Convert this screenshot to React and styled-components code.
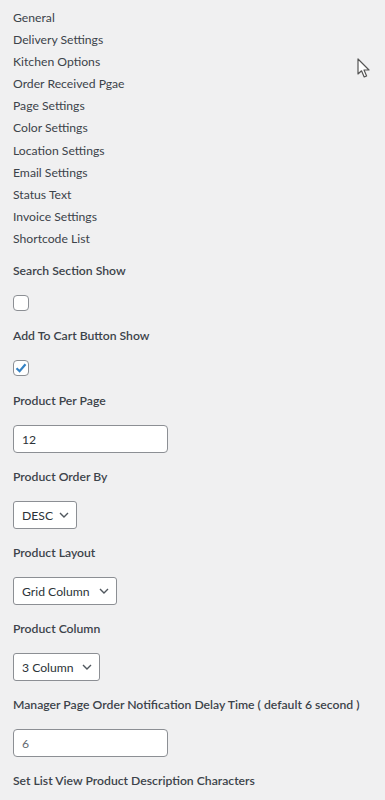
import React from "react";
import styled, { createGlobalStyle } from "styled-components";

const Global = createGlobalStyle`
  html, body {
    margin: 0;
    background: #f0f0f1;
  }
  body {
    font-family: "Segoe UI", Lato, "Liberation Sans", sans-serif;
    font-size: 12.2px;
    color: #3c434a;
  }
`;

const Page = styled.div`
  position: relative;
  min-height: 800px;
  padding: 7px 13px 0;
  box-sizing: border-box;
`;

const Nav = styled.ul`
  list-style: none;
  margin: 0 0 11px;
  padding: 0;
`;

const NavItem = styled.li`
  line-height: 22.1px;
  color: #3c434a;
`;

const Field = styled.div`
  display: flex;
  flex-direction: column;
  align-items: flex-start;
  padding-bottom: ${(p) => (p.$tight ? 15 : 14)}px;
`;

const Label = styled.div`
  font-weight: 600;
  line-height: 20px;
  color: #3c434a;
  margin-bottom: 14px;
  white-space: nowrap;
`;

const Box = styled.span`
  width: 16px;
  height: 16px;
  box-sizing: border-box;
  border: 1px solid #8c8f94;
  border-radius: 4px;
  background: #fff;
  display: flex;
  align-items: center;
  justify-content: center;
`;

const TextInput = styled.input`
  width: 155px;
  height: 28px;
  box-sizing: border-box;
  border: 1px solid #8c8f94;
  border-radius: 4px;
  background: #fff;
  padding: 0 8px;
  font: inherit;
  color: #2c3338;
  outline: none;
  &::placeholder {
    color: #646970;
  }
`;

const Select = styled.div`
  height: 28px;
  box-sizing: border-box;
  border: 1px solid #8c8f94;
  border-radius: 3px;
  background: #fff;
  padding: 0 6px 0 8px;
  display: flex;
  align-items: center;
  gap: ${(p) => p.$gap || 7}px;
  color: #2c3338;
  white-space: nowrap;
`;

const Cursor = styled.svg`
  position: absolute;
  left: 357px;
  top: 58px;
`;

function Checkbox({ checked }) {
  return (
    <Box>
      {checked && (
        <svg width="14" height="14" viewBox="0 0 14 14">
          <path d="M2.5 7.2 L5.6 10.2 L11.5 3.2" fill="none" stroke="#3582c4" strokeWidth="2.2" />
        </svg>
      )}
    </Box>
  );
}

function Dropdown({ value, gap }) {
  return (
    <Select $gap={gap}>
      {value}
      <svg width="12" height="12" viewBox="0 0 12 12">
        <path d="M2 4 L6 8 L10 4" fill="none" stroke="#50575e" strokeWidth="1.4" />
      </svg>
    </Select>
  );
}

const tabs = [
  "General",
  "Delivery Settings",
  "Kitchen Options",
  "Order Received Pgae",
  "Page Settings",
  "Color Settings",
  "Location Settings",
  "Email Settings",
  "Status Text",
  "Invoice Settings",
  "Shortcode List",
];

export default function App() {
  return (
    <>
      <Global />
      <Page>
        <Nav>
          {tabs.map((t) => (
            <NavItem key={t}>{t}</NavItem>
          ))}
        </Nav>
        <Field $tight>
          <Label>Search Section Show</Label>
          <Checkbox />
        </Field>
        <Field $tight>
          <Label>Add To Cart Button Show</Label>
          <Checkbox checked />
        </Field>
        <Field>
          <Label>Product Per Page</Label>
          <TextInput defaultValue="12" />
        </Field>
        <Field>
          <Label>Product Order By</Label>
          <Dropdown value="DESC" gap={5} />
        </Field>
        <Field>
          <Label>Product Layout</Label>
          <Dropdown value="Grid Column" gap={8} />
        </Field>
        <Field>
          <Label>Product Column</Label>
          <Dropdown value="3 Column" />
        </Field>
        <Field>
          <Label>Manager Page Order Notification Delay Time ( default 6 second )</Label>
          <TextInput placeholder="6" />
        </Field>
        <Field>
          <Label>Set List View Product Description Characters</Label>
        </Field>
        <Cursor width="14" height="21" viewBox="0 0 14 21">
          <path d="M1 1 L1 16 L4.5 12.8 L7.2 19 L9.6 18 L7 12 L12 12 Z" fill="#fff" stroke="#555" strokeWidth="1.2" strokeLinejoin="round" />
        </Cursor>
      </Page>
    </>
  );
}
